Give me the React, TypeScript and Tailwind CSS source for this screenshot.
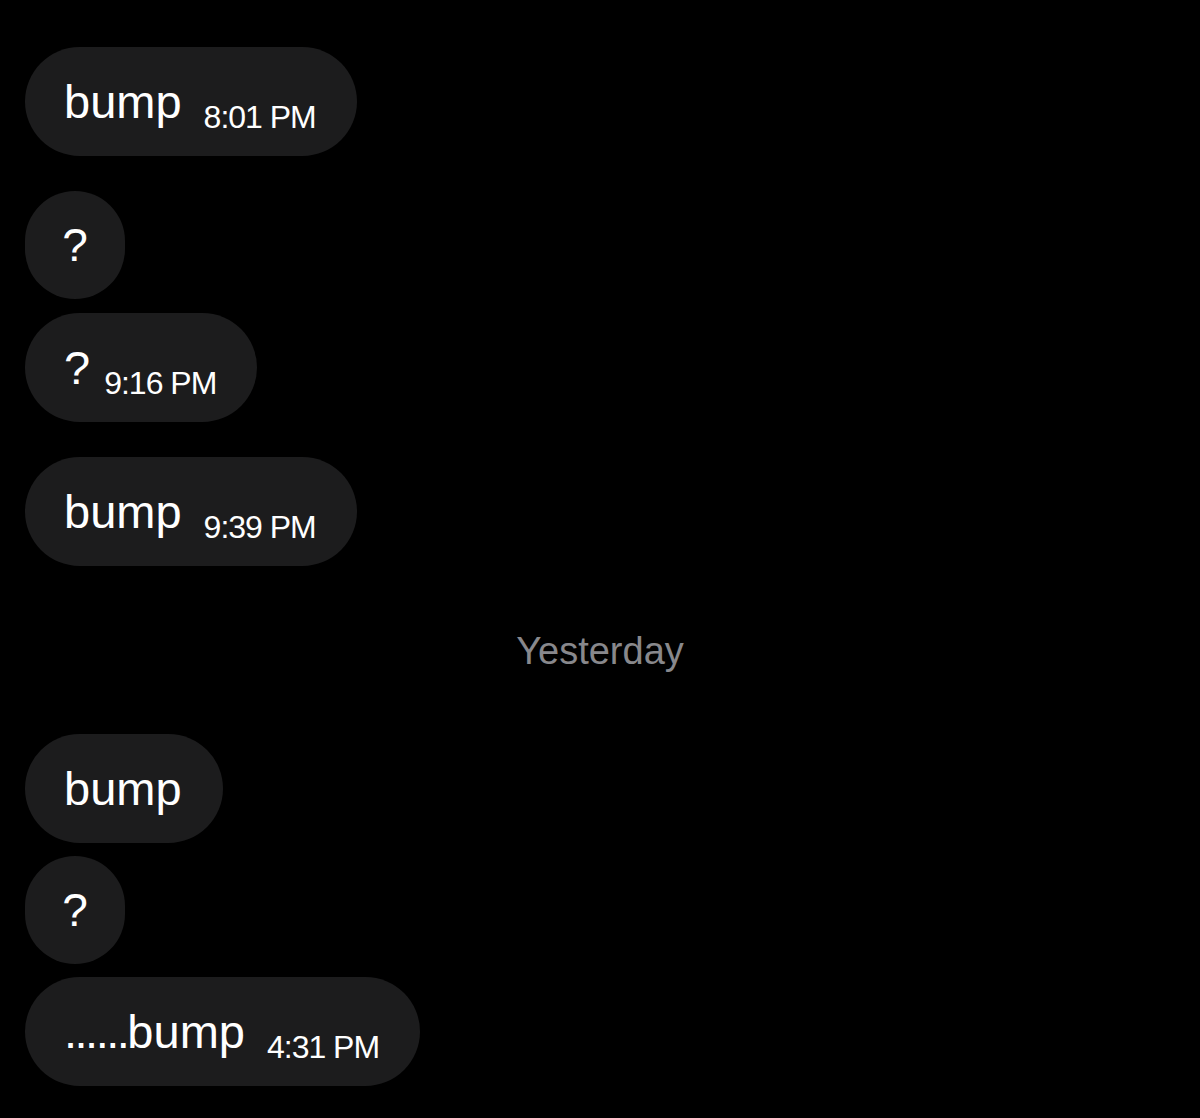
type Msg = { text: string; lead?: string; time?: string; round?: boolean; gap: string; space?: string };

const before: Msg[] = [
  { text: "bump", time: "8:01 PM", gap: "mt-0" },
  { text: "?", round: true, gap: "mt-[35px]" },
  { text: "?", time: "9:16 PM", gap: "mt-[14px]", space: "ml-[14px]" },
  { text: "bump", time: "9:39 PM", gap: "mt-[35px]" },
];

const after: Msg[] = [
  { text: "bump", gap: "mt-0" },
  { text: "?", round: true, gap: "mt-[13px]" },
  { text: "bump", lead: "......", time: "4:31 PM", gap: "mt-[13px]" },
];

function Bubble({ m }: { m: Msg }) {
  if (m.round) {
    return (
      <div className={`${m.gap} flex h-[108px] w-[100px] items-center justify-center rounded-full bg-[#1c1c1d]`}>
        <span className="text-[46px] leading-none text-white">{m.text}</span>
      </div>
    );
  }
  return (
    <div className={`${m.gap} flex h-[109px] items-center self-start rounded-full bg-[#1c1c1d] pl-[39px] pr-[41px]`}>
      <div className="flex items-baseline">
        <span className="text-[47px] leading-none text-white">
          {m.lead && <span className="tracking-[-2.5px]">{m.lead}</span>}
          {m.text}
        </span>
        {m.time && (
          <span className={`${m.space ?? "ml-[22px]"} translate-y-[10px] text-[32px] leading-none tracking-[-1px] text-white`}>
            {m.time}
          </span>
        )}
      </div>
    </div>
  );
}

export default function App() {
  return (
    <div
      className="flex min-h-[1118px] w-[1200px] flex-col bg-black pl-[25px] pt-[47px]"
      style={{ fontFamily: '"Liberation Sans", Arial, sans-serif' }}
    >
      {before.map((m, i) => (
        <Bubble key={i} m={m} />
      ))}

      <div className="mb-[64px] mt-[66px] -ml-[25px] text-center text-[38px] leading-none text-[#88888c]">
        Yesterday
      </div>

      {after.map((m, i) => (
        <Bubble key={i} m={m} />
      ))}
    </div>
  );
}
